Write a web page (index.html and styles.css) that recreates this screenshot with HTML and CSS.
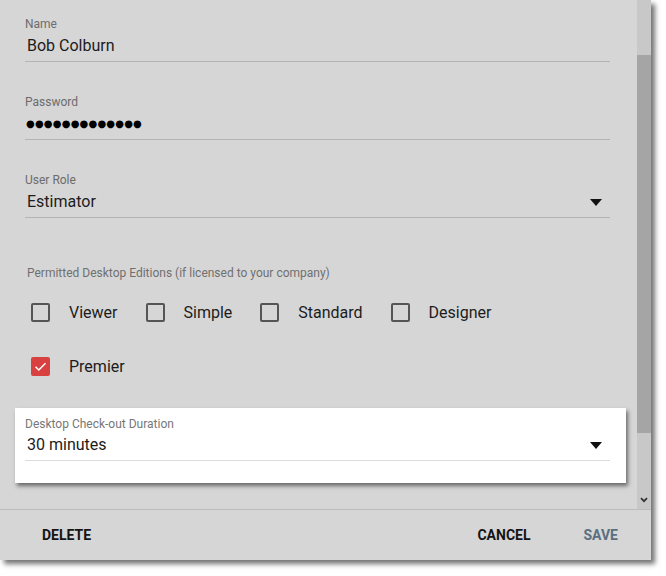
FILE: index.html
```html
<!DOCTYPE html>
<html>
<head>
<meta charset="utf-8">
<link rel="stylesheet" href="styles.css">
</head>
<body>
<div class="dialog">
  <div class="main">
    <div class="content">
      <div class="field">
        <div class="label">Name</div>
        <div class="value">Bob Colburn</div>
      </div>
      <div class="field">
        <div class="label">Password</div>
        <div class="value dots">●●●●●●●●●●●●●</div>
      </div>
      <div class="field">
        <div class="label">User Role</div>
        <div class="value select">
          <span>Estimator</span>
          <svg class="caret" width="12" height="7" viewBox="0 0 12 7"><polygon points="0,0 12,0 6,7" fill="#111"/></svg>
        </div>
      </div>
      <div class="section-label">Permitted Desktop Editions (if licensed to your company)</div>
      <div class="check-row">
        <label class="check"><span class="box"></span><span>Viewer</span></label>
        <label class="check"><span class="box"></span><span>Simple</span></label>
        <label class="check"><span class="box"></span><span>Standard</span></label>
        <label class="check"><span class="box"></span><span>Designer</span></label>
      </div>
      <div class="check-row second">
        <label class="check"><span class="box checked"><svg width="19" height="19" viewBox="0 0 19 19"><path d="M4.5 9.8 L7.8 13 L14.5 6.3" fill="none" stroke="#fff" stroke-width="1.6"/></svg></span><span>Premier</span></label>
      </div>
      <div class="card">
        <div class="field card-field">
          <div class="label">Desktop Check-out Duration</div>
          <div class="value select">
            <span>30 minutes</span>
            <svg class="caret" width="12" height="7" viewBox="0 0 12 7"><polygon points="0,0 12,0 6,7" fill="#111"/></svg>
          </div>
        </div>
      </div>
    </div>
    <div class="scrollbar">
      <div class="thumb"></div>
      <svg class="chev" width="8" height="6" viewBox="0 0 8 6"><path d="M1 1.2 L4 4.2 L7 1.2" fill="none" stroke="#333" stroke-width="1.8"/></svg>
    </div>
  </div>
  <div class="footer">
    <span class="btn">DELETE</span>
    <span class="spacer"></span>
    <span class="btn">CANCEL</span>
    <span class="btn save">SAVE</span>
  </div>
</div>
</body>
</html>
```

FILE: styles.css
```css
html, body {
  margin: 0;
  padding: 0;
  background: #ffffff;
}
body {
  font-family: Roboto, "Liberation Sans", sans-serif;
  width: 666px;
  height: 576px;
  overflow: hidden;
}
.dialog {
  width: 651px;
  height: 560px;
  background: #d6d6d6;
  box-shadow: 4px 4px 5px rgba(0, 0, 0, 0.55);
  display: flex;
  flex-direction: column;
}
.main {
  flex: 0 0 509px;
  display: flex;
  overflow: hidden;
}
.content {
  flex: 1;
  padding: 17px 27px 0 25px;
}
.field {
  padding-bottom: 5px;
  border-bottom: 1px solid #b4b4b4;
  margin-bottom: 33px;
}
.label {
  font-size: 12px;
  line-height: 14px;
  color: #6c6c6c;
}
.value {
  margin-top: 5px;
  font-size: 16px;
  line-height: 20px;
  color: #1c1c1c;
  padding-left: 2px;
}
.dots {
  font-family: "DejaVu Sans", sans-serif;
  font-size: 10px;
  letter-spacing: 0.2px;
  color: #000;
  padding-left: 1px;
}
.select {
  display: flex;
  align-items: center;
  justify-content: space-between;
}
.caret {
  margin-right: 8px;
  display: block;
}
.section-label {
  margin-top: 48px;
  font-size: 12px;
  line-height: 14px;
  color: #707070;
  padding-left: 2px;
}
.check-row {
  display: flex;
  align-items: center;
  height: 24px;
  margin-top: 20px;
  padding-left: 6px;
  gap: 28px;
}
.check-row.second {
  margin-top: 30px;
}
.check {
  display: flex;
  align-items: center;
  gap: 19px;
  font-size: 16px;
  line-height: 20px;
  color: #1c1c1c;
}
.check span:last-child {
  position: relative;
  top: 1px;
}
.box {
  box-sizing: border-box;
  width: 19px;
  height: 19px;
  border: 2px solid #555;
  border-radius: 2px;
  display: block;
  position: relative;
}
.box.checked {
  background: #d94141;
  border-color: #d94141;
}
.box.checked svg {
  position: absolute;
  left: -2px;
  top: -2px;
}
.card {
  margin: 30px -16px 0 -10px;
  padding: 9px 16px 22px 10px;
  background: #ffffff;
  box-shadow: 2px 3px 4px rgba(0, 0, 0, 0.5);
}
.card-field {
  margin-bottom: 0;
  border-bottom-color: #dcdcdc;
}
.card-field .label {
  color: #777;
}
.card-field .value {
  margin-top: 4px;
}
.scrollbar {
  flex: 0 0 14px;
  background: #c8c8c8;
  display: flex;
  flex-direction: column;
  align-items: center;
}
.thumb {
  margin-top: 55px;
  width: 14px;
  height: 378px;
  background: #a5a5a5;
}
.chev {
  margin-top: auto;
  margin-bottom: 6px;
  display: block;
}
.footer {
  flex: 1;
  border-top: 1px solid #bcbcbc;
  display: flex;
  align-items: center;
  padding: 0 33px 0 42px;
}
.btn {
  font-size: 14px;
  line-height: 16px;
  font-weight: 700;
  color: #141414;
}
.spacer {
  flex: 1;
}
.save {
  margin-left: 53px;
  color: #5a6e80;
}
```
